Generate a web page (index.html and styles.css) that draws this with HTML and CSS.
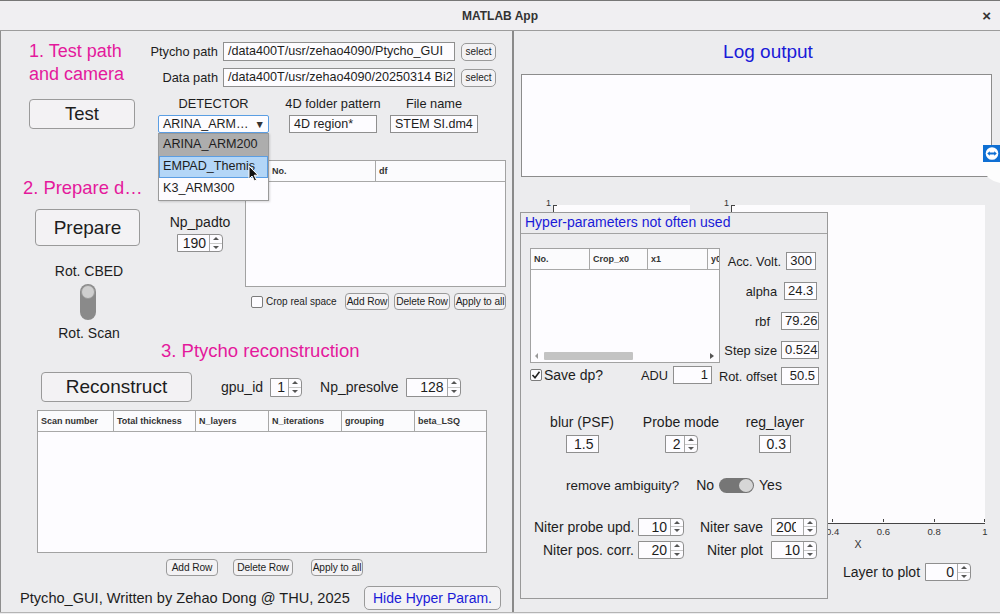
FILE: index.html
```html
<!DOCTYPE html>
<html>
<head>
<meta charset="utf-8">
<title>MATLAB App</title>
<link rel="stylesheet" href="styles.css">
</head>
<body>
<header class="titlebar"><span></span><span class="title">MATLAB App</span><span class="close">×</span></header>
<main class="main">
  <section class="left">
    <div class="sec1">
      <div class="s1-left">
        <h2 class="mag h-test">1. Test path<br>and camera</h2>
        <button class="btn btn-test">Test</button>
      </div>
      <div class="s1-right">
        <div class="path-row"><span class="plabel">Ptycho path</span><span class="field path">/data400T/usr/zehao4090/Ptycho_GUI</span><button class="btn sbtn">select</button></div>
        <div class="path-row r2"><span class="plabel">Data path</span><span class="field path">/data400T/usr/zehao4090/20250314 Bi2</span><button class="btn sbtn">select</button></div>
        <div class="det-row">
          <div class="col col-det">
            <span class="clabel">DETECTOR</span>
            <div class="dropdown"><span>ARINA_ARM…</span><span class="caret">▼</span></div>
            <ul class="ddlist">
              <li class="sel">ARINA_ARM200</li>
              <li class="hov">EMPAD_Themis<svg class="cursor" width="11" height="17" viewBox="0 0 11 17"><path d="M1 1 V14 L4 11 L6.5 16 L8.5 15 L6.2 10.2 H10 Z" fill="#111" stroke="#fff" stroke-width="1"/></svg></li>
              <li>K3_ARM300</li>
            </ul>
          </div>
          <div class="col col-fold"><span class="clabel">4D folder pattern</span><span class="field small">4D region*</span></div>
          <div class="col col-file"><span class="clabel">File name</span><span class="field small">STEM SI.dm4</span></div>
        </div>
      </div>
    </div>

    <div class="sec2">
      <div class="colA">
        <h2 class="mag h-prep">2. Prepare d…</h2>
        <button class="btn btn-prep">Prepare</button>
        <span class="rlabel r-cbed">Rot. CBED</span>
        <div class="vtoggle"><span class="knob"></span></div>
        <span class="rlabel r-scan">Rot. Scan</span>
      </div>
      <div class="colB">
        <div class="spin hidden-spin"><span class="sv"></span><span class="sa"><i></i><i></i></span></div>
        <span class="blabel">Np_padto</span>
        <div class="spin s-pad"><span class="sv">190</span><span class="sa"><i></i><i></i></span></div>
      </div>
      <div class="colC">
        <div class="tbl tbl-df">
          <div class="thead"><span></span><span>No.</span><span>df</span></div>
        </div>
        <div class="ctrl-row">
          <span class="cbox"></span><span class="ctext">Crop real space</span>
          <div class="btn-group">
            <button class="btn tbtn w44">Add Row</button>
            <button class="btn tbtn w56">Delete Row</button>
            <button class="btn tbtn w52">Apply to all</button>
          </div>
        </div>
      </div>
    </div>

    <h2 class="mag h-recon">3. Ptycho reconstruction</h2>
    <div class="recon-row">
      <button class="btn btn-recon">Reconstruct</button>
      <span class="ilabel gpu">gpu_id</span>
      <div class="spin s-gpu"><span class="sv">1</span><span class="sa"><i></i><i></i></span></div>
      <span class="ilabel npre">Np_presolve</span>
      <div class="spin s-npre"><span class="sv">128</span><span class="sa"><i></i><i></i></span></div>
    </div>
    <div class="tbl tbl-recon">
      <div class="thead"><span>Scan number</span><span>Total thickness</span><span>N_layers</span><span>N_iterations</span><span>grouping</span><span>beta_LSQ</span></div>
    </div>
    <div class="rbtn-row">
      <button class="btn tbtn w52">Add Row</button>
      <button class="btn tbtn w60">Delete Row</button>
      <button class="btn tbtn w52">Apply to all</button>
    </div>
    <footer class="foot">
      <span class="credit">Ptycho_GUI, Written by Zehao Dong @ THU, 2025</span>
      <button class="btn btn-hide">Hide Hyper Param.</button>
    </footer>
  </section>

  <section class="right">
    <h2 class="blue h-log">Log output</h2>
    <div class="log"></div>
    <div class="plot">
      <div class="axes ax1"><span class="ytop">1</span></div>
      <div class="axes ax2">
        <span class="ytop">1</span>
        <div class="xticks">
          <span class="tk"></span><span class="tk"></span><span class="tk"><b>0.4</b></span><span class="tk"><b>0.6</b></span><span class="tk"><b>0.8</b></span><span class="tk"><b>1</b></span>
        </div>
        <span class="xlabel">X</span>
      </div>

      <div class="hyper">
        <div class="hyper-title blue">Hyper-parameters not often used</div>
        <div class="hrow1">
          <div class="hleft">
            <div class="tbl tbl-hyp">
              <div class="thead"><span>No.</span><span>Crop_x0</span><span>x1</span><span>y0</span></div>
              <div class="hscroll"><span class="arrl"></span><span class="thumb"></span><span class="arrr"></span></div>
            </div>
            <div class="save-row">
              <span class="cbox checked"><svg width="10" height="10" viewBox="0 0 10 10"><path d="M1.5 5 L4 7.8 L8.5 1.8" fill="none" stroke="#222" stroke-width="1.6"/></svg></span>
              <span class="stext">Save dp?</span>
              <span class="hlabel adu">ADU</span>
              <span class="field num w39">1</span>
            </div>
          </div>
          <div class="hright">
            <div class="frow f1"><span class="hlabel">Acc. Volt.</span><span class="field num w30">300</span></div>
            <div class="frow f2"><span class="hlabel">alpha</span><span class="field num w33">24.3</span></div>
            <div class="frow f3"><span class="hlabel">rbf</span><span class="field num w38">79.26</span></div>
            <div class="frow f4"><span class="hlabel">Step size</span><span class="field num w38">0.524</span></div>
            <div class="frow f5"><span class="hlabel">Rot. offset</span><span class="field num w38">50.5</span></div>
          </div>
        </div>
        <div class="hrow2">
          <div class="pcol c1"><span class="plab">blur (PSF)</span><span class="field num w33 big">1.5</span></div>
          <div class="pcol c2"><span class="plab">Probe mode</span><div class="spin s-probe"><span class="sv">2</span><span class="sa"><i></i><i></i></span></div></div>
          <div class="pcol c3"><span class="plab">reg_layer</span><span class="field num w32 big">0.3</span></div>
        </div>
        <div class="hrow3">
          <span class="amb">remove ambiguity?</span>
          <span class="no">No</span>
          <div class="htoggle"><span class="knob"></span></div>
          <span class="yes">Yes</span>
        </div>
        <div class="hgrid">
          <span class="glab">Niter probe upd.</span>
          <div class="spin"><span class="sv">10</span><span class="sa"><i></i><i></i></span></div>
          <span class="glab">Niter save</span>
          <div class="spin clip"><span class="sv"><span>200</span></span><span class="sa"><i></i><i></i></span></div>
          <span class="glab">Niter pos. corr.</span>
          <div class="spin"><span class="sv">20</span><span class="sa"><i></i><i></i></span></div>
          <span class="glab">Niter plot</span>
          <div class="spin"><span class="sv">10</span><span class="sa"><i></i><i></i></span></div>
        </div>
      </div>
    </div>
    <div class="layer-row">
      <span class="ilabel">Layer to plot</span>
      <div class="spin s-layer"><span class="sv">0</span><span class="sa"><i></i><i></i></span></div>
    </div>
    <svg class="tv" width="17" height="40" viewBox="0 0 17 40">
      <path d="M0 17 H17 V38 Q3 35 0 24 Z" fill="#fdfdfd"/>
      <rect x="0" y="0" width="17" height="17" fill="#0f6fd3"/>
      <circle cx="9" cy="8.5" r="6.3" fill="#fff"/>
      <path d="M4.2 8.5 L6.8 6.3 V7.6 H11.2 V6.3 L13.8 8.5 L11.2 10.7 V9.4 H6.8 V10.7 Z" fill="#0f6fd3"/>
    </svg>
  </section>
</main>
</body>
</html>
```

FILE: styles.css
```css
* { box-sizing: border-box; margin: 0; padding: 0; }
html, body { width: 1000px; height: 614px; overflow: hidden; }
body {
  background: #ececee;
  font-family: "Liberation Sans", Arial, sans-serif;
  color: #1d1d1d;
}
button { font-family: inherit; color: #1d1d1d; cursor: default; }
h2 { font-weight: normal; }
ul { list-style: none; }

/* title bar */
.titlebar {
  height: 31px;
  background: #f0eff2;
  border-top: 1px solid #777;
  border-bottom: 1px solid #9c9c9c;
  display: grid;
  grid-template-columns: 1fr auto 1fr;
  align-items: center;
}
.title { font-weight: bold; font-size: 12px; color: #333; }
.close { justify-self: end; margin-right: 9px; font-size: 15px; font-weight: bold; color: #333; }

.main { display: flex; height: 582px; border-bottom: 1px solid #b4b4b4; }

.mag { color: #e4199c; }
.blue { color: #1a1ad8; }

/* generic controls */
.btn {
  background: #f3f2f4;
  border: 1px solid #9a9a9a;
  border-radius: 4px;
  display: flex;
  align-items: center;
  justify-content: center;
  white-space: nowrap;
}
.field {
  display: block;
  height: 19px;
  border: 1px solid #8f8f8f;
  background: #fdfcff;
  font-size: 12.5px;
  line-height: 17px;
  padding: 0 4px;
  white-space: nowrap;
  overflow: hidden;
}
.field.num { text-align: right; padding: 0 3px; font-size: 13px; height: 18px; line-height: 16px; }
.field.big { font-size: 14px; padding-right: 4px; }
.w30 { width: 30px; } .w32 { width: 32px; } .w33 { width: 33px; } .w38 { width: 38px; } .w39 { width: 39px; }

.spin {
  display: flex;
  height: 18px;
  border: 1px solid #8f8f8f;
  background: #fdfcff;
  border-radius: 0 4px 4px 0;
}
.sv { flex: 1; text-align: right; padding-right: 3px; font-size: 14px; line-height: 16px; overflow: hidden; white-space: nowrap; }
.sa { width: 13px; border-left: 1px solid #a8a8a8; display: flex; flex-direction: column; }
.sa i { flex: 1; display: flex; align-items: center; justify-content: center; }
.sa i:first-child { border-bottom: 1px solid #c8c8c8; }
.sa i::before { content: ""; border-left: 3px solid transparent; border-right: 3px solid transparent; }
.sa i:first-child::before { border-bottom: 3px solid #555; }
.sa i:last-child::before { border-top: 3px solid #555; }
.spin.clip .sv { text-align: left; padding: 0 0 0 4px; }
.spin.clip .sv span { display: inline-block; width: 20px; overflow: hidden; vertical-align: top; }

.cbox {
  width: 12px; height: 12px;
  border: 1px solid #7c7c7c;
  border-radius: 2px;
  background: #fdfcff;
  display: flex; align-items: center; justify-content: center;
  flex: none;
}

.tbl { border: 1px solid #a2a2a2; background: #fdfcff; position: relative; }
.thead {
  display: grid;
  height: 21px;
  border-bottom: 1px solid #a8a8a8;
  background: #fbfbfd;
}
.thead span {
  font-size: 9px;
  font-weight: bold;
  color: #333;
  padding-left: 3px;
  line-height: 20px;
  border-right: 1px solid #a8a8a8;
  white-space: nowrap;
  overflow: hidden;
}
.thead span:last-child { border-right: none; }

/* ---------------- LEFT ---------------- */
.left {
  width: 514px;
  flex: none;
  border-left: 1px solid #8e8e8e;
  border-right: 2px solid #8a8a8a;
  display: flex;
  flex-direction: column;
}
.sec1 { display: flex; }
.s1-left { width: 149px; padding-left: 28px; display: flex; flex-direction: column; align-items: flex-start; }
.h-test { margin-top: 9px; font-size: 18px; line-height: 23px; white-space: nowrap; }
.btn-test { margin-top: 13px; width: 106px; height: 30px; font-size: 18.5px; }

.s1-right { display: flex; flex-direction: column; }
.path-row { display: flex; align-items: center; margin-top: 11px; height: 19px; }
.path-row.r2 { margin-top: 7px; }
.plabel { width: 68px; text-align: right; margin-right: 5px; font-size: 12.8px; white-space: nowrap; }
.field.path { width: 232px; font-size: 12.6px; }
.sbtn { margin-left: 6px; width: 35px; height: 18px; font-size: 10px; border-radius: 5px; }

.det-row { display: flex; margin-left: 8px; margin-top: 9px; }
.col { display: flex; flex-direction: column; }
.clabel {
  height: 15px; line-height: 15px; font-size: 12.8px; margin-bottom: 4px;
  display: flex; justify-content: center; white-space: nowrap;
}
.col-det { width: 111px; position: relative; z-index: 5; }
.col-fold { width: 88px; margin-left: 20px; }
.col-file { width: 88px; margin-left: 13px; }
.field.small { height: 18px; line-height: 16px; }
.dropdown {
  height: 18px;
  border: 1px solid #5b9ee3;
  border-radius: 2px;
  background: #fdfcff;
  display: flex; align-items: center; justify-content: space-between;
  padding: 0 3px 0 4px;
  font-size: 12.5px;
  white-space: nowrap;
}
.caret { font-size: 10.5px; color: #333; }
.ddlist {
  position: absolute;
  left: 0; top: 37px;
  width: 111px;
  border: 1px solid #9a9a9a;
  background: #fdfcff;
  box-shadow: 1px 1px 2px rgba(0,0,0,0.15);
}
.ddlist li { height: 22px; line-height: 21px; font-size: 12.6px; padding-left: 4px; white-space: nowrap; overflow: visible; position: relative; }
.ddlist li.sel { background: #adadad; }
.ddlist li.hov { background: #b3d6f7; border: 1px solid #5b9ee3; line-height: 19px; padding-left: 3px; }
.cursor { position: absolute; left: 88px; top: 8px; }

.sec2 { display: flex; }
.colA { width: 176px; display: flex; flex-direction: column; align-items: flex-start; }
.h-prep { margin-top: 43px; padding-left: 22px; font-size: 18.4px; line-height: 23px; white-space: nowrap; }
.btn-prep { margin-top: 10px; margin-left: 34px; width: 105px; height: 37px; font-size: 19px; }
.rlabel { width: 176px; text-align: center; font-size: 14px; }
.r-cbed { margin-top: 17px; line-height: 16px; }
.r-scan { margin-top: 6px; line-height: 14px; }
.vtoggle {
  margin-top: 5px; margin-left: 79px;
  width: 16px; height: 36px; border-radius: 8px;
  background: #8a8a8a;
  padding: 1px;
}
.vtoggle .knob { display: block; width: 14px; height: 14px; border-radius: 50%; background: #cfcfcf; border: 1px solid #9a9a9a; }

.colB { width: 46px; display: flex; flex-direction: column; }
.hidden-spin { margin-top: 49px; }
.blabel { margin-top: 14px; line-height: 16px; font-size: 14px; display: flex; justify-content: center; white-space: nowrap; }
.s-pad { margin-top: 4px; }

.colC { margin-left: 22px; width: 261px; display: flex; flex-direction: column; }
.tbl-df { margin-top: 27px; height: 127px; }
.tbl-df .thead { grid-template-columns: 23px 107px 1fr; }
.ctrl-row { margin-top: 6px; height: 17px; display: flex; align-items: center; }
.ctrl-row .cbox { margin-left: 6px; }
.ctext { margin-left: 3px; font-size: 10px; white-space: nowrap; }
.btn-group { margin-left: auto; display: flex; gap: 4px; }
.btn-group .w44 { margin-right: 1px; }
.tbtn { height: 17px; font-size: 10.2px; border-radius: 4px; letter-spacing: -0.1px; }
.w44 { width: 44px; } .w52 { width: 52px; } .w56 { width: 56px; } .w60 { width: 60px; }

.h-recon { padding-left: 160px; font-size: 18.5px; line-height: 21px; white-space: nowrap; }
.recon-row { margin-top: 11px; height: 30px; display: flex; align-items: center; }
.btn-recon { margin-left: 40px; width: 151px; height: 30px; font-size: 19px; }
.ilabel { font-size: 14px; white-space: nowrap; }
.gpu { margin-left: 29px; }
.s-gpu { margin-left: 7px; width: 32px; height: 19px; }
.npre { margin-left: 18px; }
.s-npre { margin-left: 7px; width: 55px; height: 19px; }

.tbl-recon { margin-top: 8px; margin-left: 36px; width: 450px; height: 143px; }
.tbl-recon .thead { grid-template-columns: 76px 82px 73px 73px 73px 1fr; }

.rbtn-row { margin-top: 6px; margin-left: 165px; display: flex; }
.rbtn-row .w60 { margin-left: 15px; }
.rbtn-row .w60 + .w52 { margin-left: 18px; }

.foot { margin-top: 10px; display: flex; align-items: center; padding-left: 19px; }
.credit { font-size: 14.6px; white-space: nowrap; }
.btn-hide { margin-left: auto; margin-right: 11px; width: 137px; height: 24px; font-size: 14px; color: #1a1ad8; border-radius: 5px; }

/* ---------------- RIGHT ---------------- */
.right { flex: 1; display: flex; flex-direction: column; position: relative; }
.h-log { margin-top: 9px; line-height: 23px; font-size: 19px; text-align: center; padding-left: 22px; }
.log { margin-top: 11px; margin-left: 7px; width: 471px; height: 103px; border: 1px solid #8c8c8c; background: #fdfcff; }
.plot { flex: 1; position: relative; }
.layer-row { height: 18px; margin-bottom: 31px; padding-left: 329px; display: flex; align-items: center; }
.s-layer { margin-left: 5px; width: 46px; }

.axes { position: absolute; background: #fdfcfe; border-left: 1px solid #444; }
.ax1 { left: 39px; top: 28px; width: 137px; height: 200px; }
.ax2 { left: 217px; top: 28px; width: 254px; height: 319px; border-bottom: 1px solid #444; }
.ytop { position: absolute; left: -8px; top: -7px; font-size: 9px; color: #333; }
.axes::before { content: ""; position: absolute; left: 0; top: 0; width: 3px; height: 1px; background: #444; }
.xticks { position: absolute; left: -1px; right: 0; top: 100%; display: flex; justify-content: space-between; }
.tk { width: 0; display: flex; flex-direction: column; align-items: center; }
.tk::before { content: ""; width: 1px; height: 3px; margin-top: -4px; background: #444; flex: none; }
.tk b { font-weight: normal; font-size: 9.5px; color: #333; margin-top: 4px; white-space: nowrap; }
.xlabel { position: absolute; left: 126px; top: 100%; margin-top: 15px; font-size: 10.5px; color: #333; transform: translateX(-50%); }

.hyper {
  position: absolute;
  left: 6px; top: 35px;
  width: 308px; height: 387px;
  border: 1px solid #999;
  background: #ececee;
  z-index: 2;
  display: flex; flex-direction: column;
}
.hyper-title { height: 21px; line-height: 19px; font-size: 14px; padding-left: 4px; border-bottom: 1px solid #a3a3a3; white-space: nowrap; }
.hrow1 { display: flex; margin-top: 14px; }
.hleft { margin-left: 9px; width: 190px; display: flex; flex-direction: column; }
.tbl-hyp { height: 115px; overflow: hidden; }
.tbl-hyp .thead { grid-template-columns: 59px 58px 60px 40px; }
.hscroll { position: absolute; left: 2px; right: 2px; bottom: 1px; height: 11px; display: flex; align-items: center; }
.thumb { position: absolute; left: 11px; width: 89px; height: 8px; background: #c3c3c3; border-radius: 1px; }
.arrl, .arrr { position: absolute; width: 0; height: 0; border-top: 3px solid transparent; border-bottom: 3px solid transparent; }
.arrl { left: 2px; border-right: 3px solid #999; }
.arrr { right: 3px; border-left: 4px solid #555; }
.save-row { margin-top: 3px; height: 18px; display: flex; align-items: center; padding-right: 8px; }
.stext { margin-left: 2px; font-size: 14px; white-space: nowrap; }
.hlabel { font-size: 12.8px; white-space: nowrap; }
.adu { margin-left: auto; margin-right: 5px; }
.hright { width: 99px; display: flex; flex-direction: column; align-items: flex-end; }
.frow { display: flex; align-items: center; height: 18px; }
.frow .hlabel { margin-right: 5px; }
.f1 { margin-top: 4px; margin-right: 3px; }
.f2 { margin-top: 12px; margin-right: 2px; }
.f2 .hlabel { margin-right: 7px; }
.f3 { margin-top: 12px; }
.f3 .hlabel { margin-right: 11px; }
.f4 { margin-top: 11px; }
.f4 .hlabel { margin-right: 4px; }
.f5 { margin-top: 8px; }
.f5 .hlabel { margin-right: 4px; }

.hrow2 { display: flex; margin-top: 29px; margin-left: 16px; }
.pcol { width: 90px; display: flex; flex-direction: column; align-items: center; }
.c2 { margin-left: 9px; }
.c3 { margin-left: 4px; }
.plab { font-size: 14px; line-height: 16px; margin-bottom: 5px; white-space: nowrap; }
.s-probe { width: 33px; }

.hrow3 { margin-top: 24px; margin-left: 45px; height: 16px; display: flex; align-items: center; font-size: 14px; white-space: nowrap; }
.amb { font-size: 13.4px; }
.no { margin-left: 17px; }
.htoggle { margin-left: 5px; width: 35px; height: 15px; border-radius: 8px; background: #767676; display: flex; justify-content: flex-end; padding: 1px; }
.htoggle .knob { width: 14px; height: 13px; border-radius: 50%; background: #d6d6d6; }
.yes { margin-left: 5px; }

.hgrid {
  margin-top: 24px; margin-left: 13px;
  display: grid;
  grid-template-columns: 100px 46px 79px 46px;
  grid-template-rows: 19px 18px;
  column-gap: 4px; row-gap: 5px;
  align-items: center;
}
.glab { font-size: 14px; text-align: right; white-space: nowrap; }
.glab:nth-child(3), .glab:nth-child(7) { padding-right: 4px; }

.tv { position: absolute; right: 0; top: 114px; z-index: 3; }
```
